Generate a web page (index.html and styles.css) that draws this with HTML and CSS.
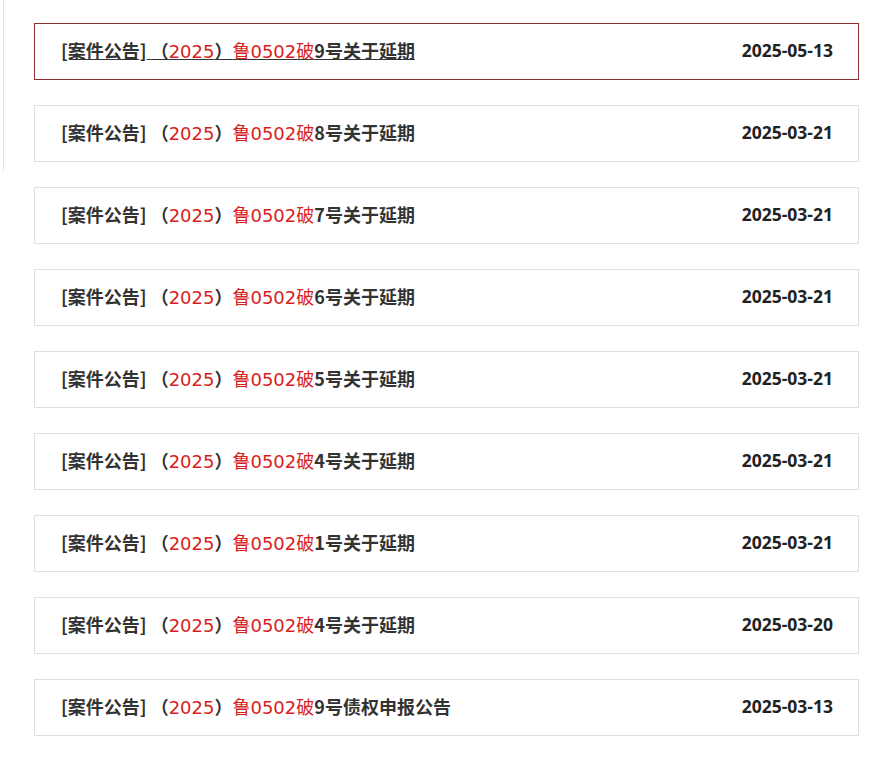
FILE: index.html
```html
<!DOCTYPE html>
<html lang="zh-CN">
<head>
<meta charset="utf-8">
<link rel="stylesheet" href="styles.css">
</head>
<body>
<div class="page">
  <div class="side"></div>
  <ul class="list">
    <li class="item active"><a class="title" href="#"><b>[案件公告]</b> <b>（</b><span class="red">2025</span><b>）</b><span class="red">鲁0502破</span><b>9号关于延期</b></a><span class="date">2025-05-13</span></li>
    <li class="item"><a class="title" href="#"><b>[案件公告]</b> <b>（</b><span class="red">2025</span><b>）</b><span class="red">鲁0502破</span><b>8号关于延期</b></a><span class="date">2025-03-21</span></li>
    <li class="item"><a class="title" href="#"><b>[案件公告]</b> <b>（</b><span class="red">2025</span><b>）</b><span class="red">鲁0502破</span><b>7号关于延期</b></a><span class="date">2025-03-21</span></li>
    <li class="item"><a class="title" href="#"><b>[案件公告]</b> <b>（</b><span class="red">2025</span><b>）</b><span class="red">鲁0502破</span><b>6号关于延期</b></a><span class="date">2025-03-21</span></li>
    <li class="item"><a class="title" href="#"><b>[案件公告]</b> <b>（</b><span class="red">2025</span><b>）</b><span class="red">鲁0502破</span><b>5号关于延期</b></a><span class="date">2025-03-21</span></li>
    <li class="item"><a class="title" href="#"><b>[案件公告]</b> <b>（</b><span class="red">2025</span><b>）</b><span class="red">鲁0502破</span><b>4号关于延期</b></a><span class="date">2025-03-21</span></li>
    <li class="item"><a class="title" href="#"><b>[案件公告]</b> <b>（</b><span class="red">2025</span><b>）</b><span class="red">鲁0502破</span><b>1号关于延期</b></a><span class="date">2025-03-21</span></li>
    <li class="item"><a class="title" href="#"><b>[案件公告]</b> <b>（</b><span class="red">2025</span><b>）</b><span class="red">鲁0502破</span><b>4号关于延期</b></a><span class="date">2025-03-20</span></li>
    <li class="item"><a class="title" href="#"><b>[案件公告]</b> <b>（</b><span class="red">2025</span><b>）</b><span class="red">鲁0502破</span><b>9号债权申报公告</b></a><span class="date">2025-03-13</span></li>
  </ul>
</div>
</body>
</html>
```

FILE: styles.css
```css
html, body {
  margin: 0;
  padding: 0;
  background: #fff;
}
.page {
  display: flex;
  align-items: flex-start;
  font-family: "Noto Sans CJK SC", "Open Sans", sans-serif;
}
.side {
  width: 0;
  height: 171px;
  margin-left: 3px;
  border-left: 1px solid #e2e2e2;
}
.list {
  list-style: none;
  margin: 23px 0 0 30px;
  padding: 0;
  width: 825px;
  display: flex;
  flex-direction: column;
  gap: 25px;
}
.item {
  box-sizing: border-box;
  height: 57px;
  border: 1px solid #e0e0e0;
  display: flex;
  align-items: center;
  justify-content: space-between;
  padding: 0 25px 3px 26px;
}
.item.active {
  border-color: #8e2f35;
}
.title {
  color: #333;
  text-decoration: none;
  font-size: 18px;
  white-space: nowrap;
}
.title b {
  font-weight: 700;
}
.red {
  color: #d81e1e;
  font-family: "DejaVu Sans", "Noto Sans CJK SC", sans-serif;
  font-weight: 400;
}
.item.active .title {
  text-decoration: underline;
}
.date {
  font-family: "Open Sans", sans-serif;
  font-weight: 700;
  font-size: 17.5px;
  color: #222;
}
```
